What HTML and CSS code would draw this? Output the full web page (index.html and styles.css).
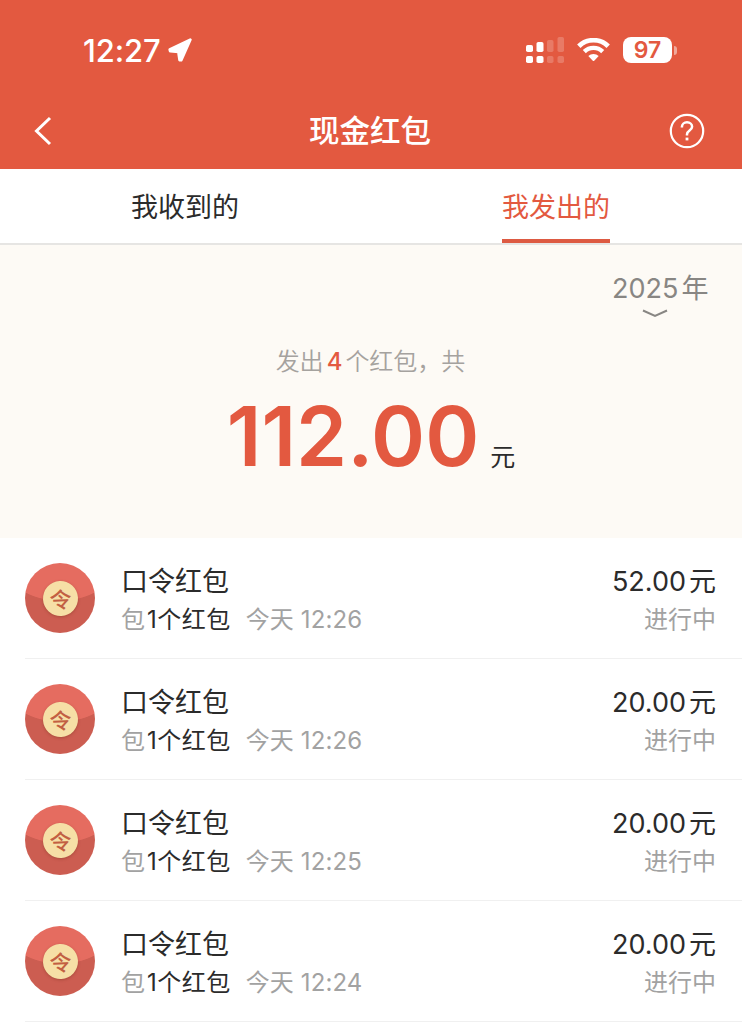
FILE: index.html
```html
<!DOCTYPE html>
<html lang="zh-CN">
<head>
    <meta charset="UTF-8">
    <meta name="viewport" content="width=device-width, initial-scale=1.0">
    <title>现金红包</title>
    <link rel="stylesheet" href="styles.css">
</head>
<body>
    <header class="header">
        <div class="status-bar">
            <div class="status-left">
                <span class="time">12:27</span>
                <svg class="location" width="24" height="24" viewBox="0 0 24 24">
                    <path d="M22.3 1.7 L1.8 11.6 L2.2 13.2 L10.4 13.9 L11.6 22 L13.2 22.2 Z" fill="#fff" stroke="#fff" stroke-width="2.8" stroke-linejoin="round"/>
                </svg>
            </div>
            <div class="status-right">
                <svg width="38" height="26" viewBox="0 0 38 26" fill="#fff">
                    <rect x="0" y="8" width="7" height="7" rx="1.8"/>
                    <rect x="0" y="19" width="7" height="7" rx="1.8"/>
                    <rect x="10.5" y="5" width="7" height="10" rx="1.8"/>
                    <rect x="10.5" y="19" width="7" height="7" rx="1.8"/>
                    <g opacity="0.2">
                        <rect x="21" y="3" width="6.5" height="12" rx="1.8"/>
                        <rect x="21" y="19" width="6.5" height="7" rx="1.8"/>
                        <rect x="31.5" y="0" width="6.5" height="15" rx="1.8"/>
                        <rect x="31.5" y="19" width="6.5" height="7" rx="1.8"/>
                    </g>
                </svg>
                <svg class="wifi" width="33" height="24" viewBox="0 0 33 24">
                    <path d="M1.8 8.2 A21 21 0 0 1 31.2 8.2" fill="none" stroke="#fff" stroke-width="4.8"/>
                    <path d="M7.3 13.6 A13.2 13.2 0 0 1 25.7 13.6" fill="none" stroke="#fff" stroke-width="4.4"/>
                    <path d="M11.3 18 A7.8 7.8 0 0 1 21.7 18 L17.2 22.8 Q16.5 23.4 15.8 22.8 Z" fill="#fff"/>
                </svg>
                <div class="battery">97</div>
                <div class="battery-cap"></div>
            </div>
        </div>
        <div class="nav-bar">
            <svg width="18" height="30" viewBox="0 0 18 30">
                <path d="M16 2 L2.5 15 L16 28" fill="none" stroke="#fff" stroke-width="3"/>
            </svg>
            <h1 class="title">现金红包</h1>
            <svg width="36" height="36" viewBox="0 0 36 36">
                <circle cx="18" cy="18" r="16.2" fill="none" stroke="#fff" stroke-width="2.2"/>
                <path d="M12.9 14.6 V14 C12.9 11.2 15.2 9.3 18 9.3 C20.9 9.3 23.1 11.2 23.1 13.8 C23.1 17.6 18 17.4 18 21.2 V22.4" fill="none" stroke="#fff" stroke-width="2.5"/>
                <rect x="16.6" y="24.6" width="2.8" height="2.8" fill="#fff"/>
            </svg>
        </div>
    </header>

    <nav class="tabs">
        <div class="tab"><span>我收到的</span></div>
        <div class="tab active"><span>我发出的</span></div>
    </nav>

    <section class="summary">
        <div class="year">
            <div class="year-text">2025<span>年</span></div>
            <svg width="26" height="9" viewBox="0 0 26 9">
                <path d="M1 1.5 L13 7 L25 1.5" fill="none" stroke="#888683" stroke-width="2"/>
            </svg>
        </div>
        <p class="count">发出<em>4</em>个红包，共</p>
        <p class="total"><span class="total-num">112.00</span><span class="unit">元</span></p>
    </section>

    <ul class="list">
        <li class="item">
            <div class="icon"><span class="coin">令</span></div>
            <div class="info">
                <div class="line"><span>口令红包</span><span class="money">52.00<i>元</i></span></div>
                <div class="line sub"><span>包<b>1个红包</b><span class="date">今天 12:26</span></span><span>进行中</span></div>
            </div>
        </li>
        <li class="item">
            <div class="icon"><span class="coin">令</span></div>
            <div class="info">
                <div class="line"><span>口令红包</span><span class="money">20.00<i>元</i></span></div>
                <div class="line sub"><span>包<b>1个红包</b><span class="date">今天 12:26</span></span><span>进行中</span></div>
            </div>
        </li>
        <li class="item">
            <div class="icon"><span class="coin">令</span></div>
            <div class="info">
                <div class="line"><span>口令红包</span><span class="money">20.00<i>元</i></span></div>
                <div class="line sub"><span>包<b>1个红包</b><span class="date">今天 12:25</span></span><span>进行中</span></div>
            </div>
        </li>
        <li class="item">
            <div class="icon"><span class="coin">令</span></div>
            <div class="info">
                <div class="line"><span>口令红包</span><span class="money">20.00<i>元</i></span></div>
                <div class="line sub"><span>包<b>1个红包</b><span class="date">今天 12:24</span></span><span>进行中</span></div>
            </div>
        </li>
    </ul>
</body>
</html>
```

FILE: styles.css
```css
* {
    box-sizing: border-box;
    margin: 0;
    padding: 0;
}

body {
    width: 742px;
    height: 1024px;
    overflow: hidden;
    background-color: #fff;
    color: #2b2b2b;
    font-family: Inter, "Noto Sans CJK SC", sans-serif;
}

svg {
    display: block;
}

/* 顶部 */
.header {
    height: 169px;
    background-color: #e35940;
    color: #fff;
}

.status-bar {
    display: flex;
    justify-content: space-between;
    height: 93px;
    padding: 36px 65px 0 83px;
}

.status-left,
.status-right {
    display: flex;
    align-items: center;
    height: 28px;
}

.time {
    width: 79px;
    font-size: 31px;
    font-weight: 550;
    line-height: 28px;
    letter-spacing: -0.1px;
    padding-top: 2px;
}

.location {
    margin-left: 6px;
}

.wifi {
    margin: 0 13px 0 13px;
}

.battery {
    width: 49px;
    height: 26px;
    border-radius: 8px;
    background-color: #fff;
    color: #e35940;
    font-size: 23px;
    font-weight: 600;
    line-height: 27px;
    text-align: center;
}

.battery-cap {
    width: 3px;
    height: 9px;
    margin-left: 2px;
    border-radius: 0 4px 4px 0;
    background-color: #f0a99b;
}

.nav-bar {
    display: flex;
    align-items: center;
    justify-content: space-between;
    height: 76px;
    padding: 0 37px 0 34px;
}

.title {
    font-size: 30.5px;
    font-weight: 500;
    line-height: 40px;
    padding-left: 19px;
}

/* 标签页 */
.tabs {
    display: flex;
    height: 76px;
    border-bottom: 2px solid #e6e5e3;
}

.tab {
    flex: 1;
    padding-right: 1px;
    text-align: center;
    font-size: 27px;
    line-height: 78px;
}

.tab span {
    display: inline-block;
    height: 74px;
}

.tab.active {
    color: #e35940;
}

.tab.active span {
    border-bottom: 4px solid #dd5a42;
}

/* 汇总 */
.summary {
    height: 293px;
    padding-top: 24px;
    background-color: #fdfaf5;
    text-align: center;
}

.year {
    width: 96px;
    margin-left: 612px;
    color: #888683;
}

.year svg {
    margin-left: 30px;
}

.year-text {
    font-size: 27px;
    line-height: 40px;
    white-space: nowrap;
}

.year-text span {
    margin-left: 3px;
}

.count {
    margin-top: 26px;
    padding-right: 1px;
    color: #a5a29e;
    font-size: 24px;
    font-weight: 350;
    line-height: 36px;
}

.count em {
    margin: 0 3px;
    color: #e35940;
    font-style: normal;
    font-weight: 500;
}

.total {
    height: 100px;
    line-height: 113px;
}

.total-num {
    color: #e35940;
    font-size: 82px;
    font-weight: 600;
}

.unit {
    margin-left: 11px;
    font-size: 25px;
}

/* 红包列表 */
.list {
    list-style: none;
}

.item {
    display: flex;
    align-items: center;
    height: 121px;
    margin-left: 25px;
    padding-right: 26px;
    border-bottom: 1px solid #f0f0f0;
}

.icon {
    display: flex;
    align-items: center;
    justify-content: center;
    width: 70px;
    height: 70px;
    border-radius: 50%;
    background: radial-gradient(ellipse 56px 38px at 50% 0, #e56c60 98%, #cc5d51 100%);
}

.coin {
    width: 35px;
    height: 35px;
    border-radius: 50%;
    background-color: #f6dfa6;
    box-shadow: 0 1px 3px rgba(120, 50, 30, 0.4);
    color: #c25f42;
    font-size: 22px;
    font-weight: 500;
    line-height: 38px;
    text-align: center;
    transform: rotate(-3deg);
}

.info {
    flex: 1;
    margin-left: 26px;
    padding-top: 4px;
}

.line {
    display: flex;
    justify-content: space-between;
    font-size: 27px;
    line-height: 40px;
}

.money i {
    margin-left: 3px;
    font-style: normal;
}

.sub {
    color: #a2a2a2;
    font-size: 24px;
    line-height: 36px;
}

.sub b {
    margin-left: 2px;
    color: #2b2b2b;
    font-weight: 400;
    letter-spacing: 0.5px;
}

.date {
    margin-left: 15px;
    letter-spacing: 0.1px;
}
```
